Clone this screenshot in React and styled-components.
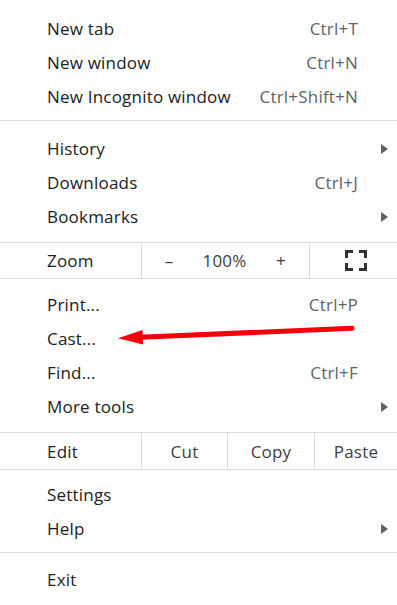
import React from "react";
import styled, { createGlobalStyle } from "styled-components";

const GlobalStyle = createGlobalStyle`
  html, body {
    margin: 0;
    padding: 0;
    background: #fff;
  }
  body {
    font-family: "Open Sans", "Noto Sans", sans-serif;
    color: #202124;
    letter-spacing: 0.2px;
  }
`;

const Menu = styled.div`
  position: relative;
  width: 397px;
  height: 605px;
  display: flex;
  flex-direction: column;
  background: #fff;
  overflow: hidden;
`;

const Group = styled.div`
  display: flex;
  flex-direction: column;
  padding-top: ${({ $top }) => $top}px;
  padding-bottom: ${({ $bottom }) => $bottom}px;
`;

const Divider = styled.div`
  height: 1px;
  background: #dadce0;
  flex-shrink: 0;
`;

const Item = styled.div`
  display: grid;
  grid-template-columns: 1fr auto 30px;
  align-items: center;
  height: 34px;
  box-sizing: border-box;
  padding: 0 9px 2px 47px;
  font-size: 17px;
`;

const Label = styled.span`
  color: #202124;
  white-space: nowrap;
`;

const Shortcut = styled.span`
  color: #5f6368;
  white-space: nowrap;
`;

const Caret = styled.span`
  justify-self: end;
  width: 0;
  height: 0;
  margin-top: 2px;
  border-top: 5px solid transparent;
  border-bottom: 5px solid transparent;
  border-left: 7px solid #5f6368;
`;

const ControlRow = styled.div`
  display: grid;
  grid-template-columns: 141px ${({ $cols }) => $cols};
  height: ${({ $height }) => $height}px;
  font-size: 17px;
`;

const RowLabel = styled.div`
  display: flex;
  align-items: center;
  padding-left: 47px;
  color: #202124;
`;

const Cell = styled.div`
  display: flex;
  align-items: center;
  justify-content: center;
  border-left: 1px solid #dadce0;
  color: ${({ $muted }) => ($muted ? "#3c4043" : "#202124")};
`;

const ZoomControls = styled.div`
  display: grid;
  grid-template-columns: 54px 1fr 56px;
  align-items: center;
  border-left: 1px solid #dadce0;
  color: #3c4043;
  text-align: center;
`;

const Arrow = styled.svg`
  position: absolute;
  left: 0;
  top: 0;
  pointer-events: none;
`;

const FullscreenIcon = () => (
  <svg width="22" height="21" viewBox="0 0 22 21" style={{ marginLeft: 4 }}>
    <path
      d="M1.5 8 V1.5 H8 M14 1.5 H20.5 V8 M20.5 13 V19.5 H14 M8 19.5 H1.5 V13"
      fill="none"
      stroke="#333"
      strokeWidth="3"
    />
  </svg>
);

const Row = ({ label, shortcut, sub }) => (
  <Item>
    <Label>{label}</Label>
    <Shortcut>{shortcut}</Shortcut>
    {sub ? <Caret /> : <span />}
  </Item>
);

const App = () => (
  <>
    <GlobalStyle />
    <Menu>
      <Group $top={12} $bottom={6}>
        <Row label="New tab" shortcut="Ctrl+T" />
        <Row label="New window" shortcut="Ctrl+N" />
        <Row label="New Incognito window" shortcut="Ctrl+Shift+N" />
      </Group>
      <Divider />
      <Group $top={11} $bottom={8}>
        <Row label="History" sub />
        <Row label="Downloads" shortcut="Ctrl+J" />
        <Row label="Bookmarks" sub />
      </Group>
      <Divider />
      <ControlRow $height={35} $cols="168px 1fr">
        <RowLabel>Zoom</RowLabel>
        <ZoomControls>
          <span>–</span>
          <span>100%</span>
          <span>+</span>
        </ZoomControls>
        <Cell>
          <FullscreenIcon />
        </Cell>
      </ControlRow>
      <Divider />
      <Group $top={9} $bottom={8}>
        <Row label="Print..." shortcut="Ctrl+P" />
        <Row label="Cast..." />
        <Row label="Find..." shortcut="Ctrl+F" />
        <Row label="More tools" sub />
      </Group>
      <Divider />
      <ControlRow $height={36} $cols="86px 87px 1fr">
        <RowLabel>Edit</RowLabel>
        <Cell $muted>Cut</Cell>
        <Cell $muted>Copy</Cell>
        <Cell $muted>Paste</Cell>
      </ControlRow>
      <Divider />
      <Group $top={8} $bottom={6}>
        <Row label="Settings" />
        <Row label="Help" sub />
      </Group>
      <Divider />
      <Group $top={10} $bottom={0}>
        <Row label="Exit" />
      </Group>

      {/* red annotation arrow pointing at Cast... */}
      <Arrow width="397" height="605" viewBox="0 0 397 605">
        <line
          x1="352"
          y1="328.3"
          x2="140"
          y2="337.3"
          stroke="#f5000a"
          strokeWidth="5"
          strokeLinecap="round"
        />
        <polygon points="118,338.3 142.5,330 143,344.5" fill="#f5000a" />
      </Arrow>
    </Menu>
  </>
);

export default App;
